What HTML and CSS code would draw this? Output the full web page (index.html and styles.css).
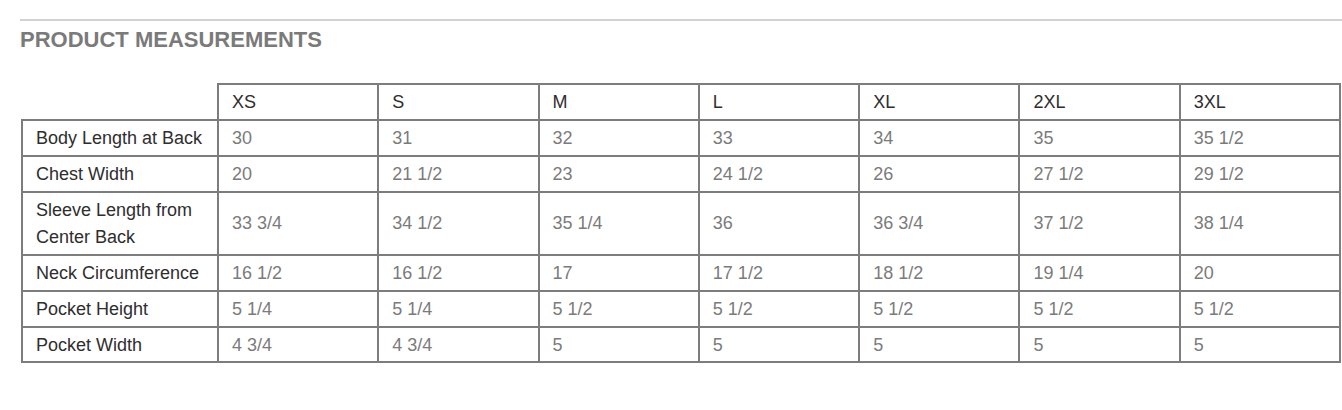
FILE: index.html
```html
<!DOCTYPE html>
<html lang="en">
<head>
<meta charset="utf-8">
<title>Product Measurements</title>
<link rel="stylesheet" href="styles.css">
</head>
<body>
<section class="measurements">
  <h2 class="title">PRODUCT MEASUREMENTS</h2>
  <table class="size-table">
    <colgroup>
      <col class="col-label">
      <col><col><col><col><col><col><col>
    </colgroup>
    <thead>
      <tr>
        <th class="corner"></th>
        <th>XS</th><th>S</th><th>M</th><th>L</th><th>XL</th><th>2XL</th><th>3XL</th>
      </tr>
    </thead>
    <tbody>
      <tr>
        <th>Body Length at Back</th>
        <td>30</td><td>31</td><td>32</td><td>33</td><td>34</td><td>35</td><td>35 1/2</td>
      </tr>
      <tr>
        <th>Chest Width</th>
        <td>20</td><td>21 1/2</td><td>23</td><td>24 1/2</td><td>26</td><td>27 1/2</td><td>29 1/2</td>
      </tr>
      <tr>
        <th>Sleeve Length from<br>Center Back</th>
        <td>33 3/4</td><td>34 1/2</td><td>35 1/4</td><td>36</td><td>36 3/4</td><td>37 1/2</td><td>38 1/4</td>
      </tr>
      <tr>
        <th>Neck Circumference</th>
        <td>16 1/2</td><td>16 1/2</td><td>17</td><td>17 1/2</td><td>18 1/2</td><td>19 1/4</td><td>20</td>
      </tr>
      <tr>
        <th>Pocket Height</th>
        <td>5 1/4</td><td>5 1/4</td><td>5 1/2</td><td>5 1/2</td><td>5 1/2</td><td>5 1/2</td><td>5 1/2</td>
      </tr>
      <tr>
        <th>Pocket Width</th>
        <td>4 3/4</td><td>4 3/4</td><td>5</td><td>5</td><td>5</td><td>5</td><td>5</td>
      </tr>
    </tbody>
  </table>
</section>
</body>
</html>
```
FILE: styles.css
```css
html, body {
  margin: 0;
  padding: 0;
  background: #ffffff;
}

body {
  font-family: "Liberation Sans", Arial, Helvetica, sans-serif;
}

.measurements {
  margin: 19px 0 0 20px;
  border-top: 2px solid #d2d2d2;
}

.title {
  margin: 6px 0 0 0;
  font-size: 22px;
  line-height: 26px;
  font-weight: bold;
  color: #7a7a7a;
}

.size-table {
  margin: 30px 0 0 1px;
  width: 1320px;
  table-layout: fixed;
  border-collapse: collapse;
  font-size: 18px;
  line-height: 26.6px;
}

.col-label {
  width: 196px;
}

.size-table th,
.size-table td {
  border: 2px solid #7d7d7d;
  padding: 4px 13px 3.4px;
  text-align: left;
  vertical-align: middle;
  font-weight: normal;
}

.size-table th {
  color: #2e2e2e;
}

.size-table td {
  color: #7b7b7b;
}

.size-table .corner {
  border: none;
}
```
